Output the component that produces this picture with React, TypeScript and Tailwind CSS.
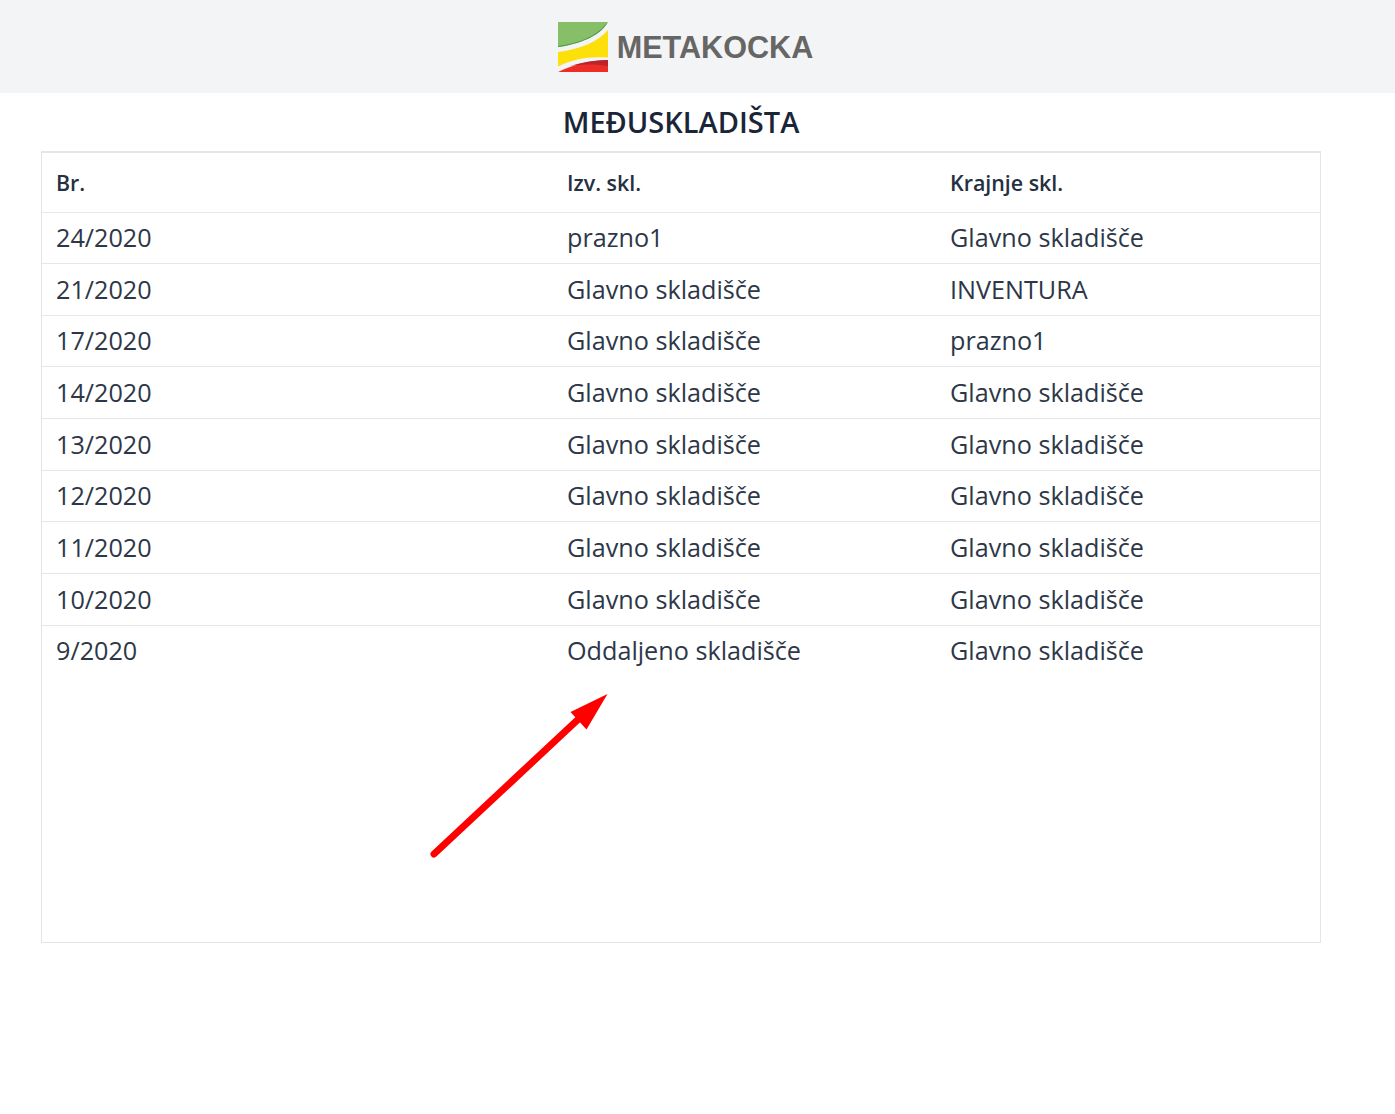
const rows = [
  ['24/2020', 'prazno1', 'Glavno skladišče'],
  ['21/2020', 'Glavno skladišče', 'INVENTURA'],
  ['17/2020', 'Glavno skladišče', 'prazno1'],
  ['14/2020', 'Glavno skladišče', 'Glavno skladišče'],
  ['13/2020', 'Glavno skladišče', 'Glavno skladišče'],
  ['12/2020', 'Glavno skladišče', 'Glavno skladišče'],
  ['11/2020', 'Glavno skladišče', 'Glavno skladišče'],
  ['10/2020', 'Glavno skladišče', 'Glavno skladišče'],
  ['9/2020', 'Oddaljeno skladišče', 'Glavno skladišče'],
];

const Logo = () => (
  <svg width="50" height="50" viewBox="0 0 50 50" className="shrink-0">
    <path d="M0 0H50C42 14 22 22 0 25Z" fill="#86bf68" />
    <path d="M0 24C22 21 38 14 47 3L50 0C42 14 22 22 0 25Z" fill="#4f9a45" />
    <path d="M0 30C22 27 40 20 50 8V35.5C32 34 14 37 0 44.5Z" fill="#fde00a" />
    <path d="M0 50C14 43 32 38 50 38V50Z" fill="#ee2d27" />
    <path d="M12 44C24 40 38 38 50 38V44C38 42 24 42 12 44Z" fill="#b8252a" />
  </svg>
);

const App = () => {
  return (
    <div className="relative min-h-[1114px] bg-white font-['Open_Sans','Noto_Sans',sans-serif] text-[#1f2937]">
      <header className="flex h-[93px] items-center justify-center bg-[#f3f4f6] pr-[24px]">
        <Logo />
        <span className="ml-[9px] pt-[2px] font-['Liberation_Sans',Arial,sans-serif] text-[30.6px] font-bold text-[#666665]">METAKOCKA</span>
      </header>
      <h1 className="h-[58px] w-[1362px] pt-[9px] text-center text-[29px] leading-[40px] font-semibold text-[#1a2638]">MEĐUSKLADIŠTA</h1>
      <div className="ml-[41px] h-[792px] w-[1280px] border border-t-2 border-[#e2e5ea]">
        <table className="w-full table-fixed border-collapse">
          <thead>
            <tr className="h-[59px] border-b border-[#e5e7eb] text-left text-[21.4px] font-semibold text-[#253041]">
              <th className="w-[511px] pt-[1px] pl-[14px] font-semibold">Br.</th>
              <th className="w-[383px] pt-[1px] pl-[14px] font-semibold">Izv. skl.</th>
              <th className="pt-[1px] pl-[14px] font-semibold">Krajnje skl.</th>
            </tr>
          </thead>
          <tbody className="text-[25.2px] text-[#2d3748]">
            {rows.map((row) => (
              <tr key={row[0]} className="h-[51.67px] border-b border-[#e5e7eb] last:border-b-transparent">
                {row.map((cell, i) => (
                  <td key={i} className="pl-[14px]">{cell}</td>
                ))}
              </tr>
            ))}
          </tbody>
        </table>
      </div>
      <svg width="200" height="190" viewBox="0 0 200 190" className="absolute top-[680px] left-[420px]">
        <path d="M14 174L166 32" stroke="#ff0000" strokeWidth="7" strokeLinecap="round" fill="none" />
        <path d="M187.5 14L150.5 32L166.5 49.5Z" fill="#ff0000" />
      </svg>
    </div>
  );
};

export default App;
